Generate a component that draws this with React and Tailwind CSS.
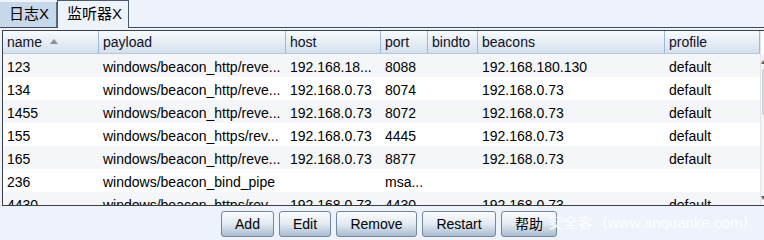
import React from "react";

const cols = [
  { key: "name", label: "name", w: "w-[96px]" },
  { key: "payload", label: "payload", w: "w-[187px]" },
  { key: "host", label: "host", w: "w-[95px]" },
  { key: "port", label: "port", w: "w-[47px]" },
  { key: "bindto", label: "bindto", w: "w-[50px]" },
  { key: "beacons", label: "beacons", w: "w-[187px]" },
  { key: "profile", label: "profile", w: "w-[95px]" },
];

const rows = [
  ["123", "windows/beacon_http/reve...", "192.168.18...", "8088", "", "192.168.180.130", "default"],
  ["134", "windows/beacon_http/reve...", "192.168.0.73", "8074", "", "192.168.0.73", "default"],
  ["1455", "windows/beacon_http/reve...", "192.168.0.73", "8072", "", "192.168.0.73", "default"],
  ["155", "windows/beacon_https/rev...", "192.168.0.73", "4445", "", "192.168.0.73", "default"],
  ["165", "windows/beacon_http/reve...", "192.168.0.73", "8877", "", "192.168.0.73", "default"],
  ["236", "windows/beacon_bind_pipe", "", "msa...", "", "", ""],
  ["4430", "windows/beacon_https/rev...", "192.168.0.73", "4430", "", "192.168.0.73", "default"],
];

function Btn({ children, w }) {
  return (
    <div
      className={`${w} h-[26px] flex items-center justify-center rounded-[3px] border border-[#75889b] bg-gradient-to-b from-[#fbfcfe] via-[#e3eaf2] to-[#a9bcd1] text-[14px] text-black`}
    >
      {children}
    </div>
  );
}

export default function App() {
  return (
    <div
      className="relative w-[764px] h-[240px] overflow-hidden bg-[#eef2fa] text-black"
      style={{ fontFamily: '"Liberation Sans", "Noto Sans CJK SC", sans-serif' }}
    >
      {/* tabs */}
      <div className="h-[28px] flex items-end border-b border-[#3d4a58]">
        <div className="h-[25px] w-[57px] flex items-center pl-[9px] bg-[#c7d8ea] border-r border-[#5d6f82] text-[15px]">
          日志X
        </div>
        <div className="h-[28px] w-[72px] -mb-px flex items-center pl-[9px] bg-[#eef2fa] border-l border-t border-r border-[#4a5a6b] text-[15px]">
          监听器X
        </div>
      </div>

      {/* table */}
      <div className="mt-[2px] ml-[2px] h-[176px] flex border-t border-l border-b border-[#3a3f46] bg-white overflow-hidden">
        <div className="flex flex-col">
          <div className="h-[23px] flex shrink-0 bg-gradient-to-b from-[#f9fbfd] to-[#d3e0ee] border-b border-[#b6c9dc]">
            {cols.map((c) => (
              <div
                key={c.key}
                className={`${c.w} h-full flex items-center px-[4px] pt-[1px] border-r border-[#9bb9d6] text-[14px] text-[#101025]`}
              >
                {c.label}
                {c.key === "name" && (
                  <svg width="8" height="5" viewBox="0 0 8 5" className="ml-[8px] mb-[2px]">
                    <polygon points="4,0 8,5 0,5" fill="#8a8f96" />
                  </svg>
                )}
              </div>
            ))}
          </div>
          {rows.map((r, i) => (
            <div
              key={i}
              className={`h-[23px] flex shrink-0 ${i % 2 === 0 ? "bg-[#f5f6f9]" : "bg-white"}`}
            >
              {cols.map((c, j) => (
                <div
                  key={c.key}
                  className={`${c.w} h-full flex items-center px-[4px] pt-[3px] whitespace-nowrap overflow-hidden text-[14px]`}
                >
                  {r[j]}
                </div>
              ))}
            </div>
          ))}
        </div>
        {/* scrollbar */}
        <div className="flex-1 flex flex-col bg-[#f3f4f6] border-l border-[#e2e4e8]">
          <div className="h-[23px] bg-white" />
          <div className="h-[15px] flex items-center justify-center text-[8px] text-[#666]">▴</div>
          <div className="h-[46px] mx-[1px] rounded-l-[3px] border border-[#cfd3d8] bg-[#f7f8fa]" />
          <div className="flex-1" />
          <div className="h-[15px] flex items-center justify-center text-[8px] text-[#666]">▾</div>
        </div>
      </div>

      {/* buttons */}
      <div className="mt-[5px] flex pl-[221px] gap-[5px]">
        <Btn w="w-[53px]">Add</Btn>
        <Btn w="w-[52px]">Edit</Btn>
        <Btn w="w-[81px]">Remove</Btn>
        <Btn w="w-[74px]">Restart</Btn>
        <Btn w="w-[56px]">帮助</Btn>
      </div>

      {/* watermark */}
      <div className="absolute left-[548px] top-[212px] text-[15px] text-white/85 whitespace-nowrap">
        安全客（www.anquanke.com）
      </div>
    </div>
  );
}
